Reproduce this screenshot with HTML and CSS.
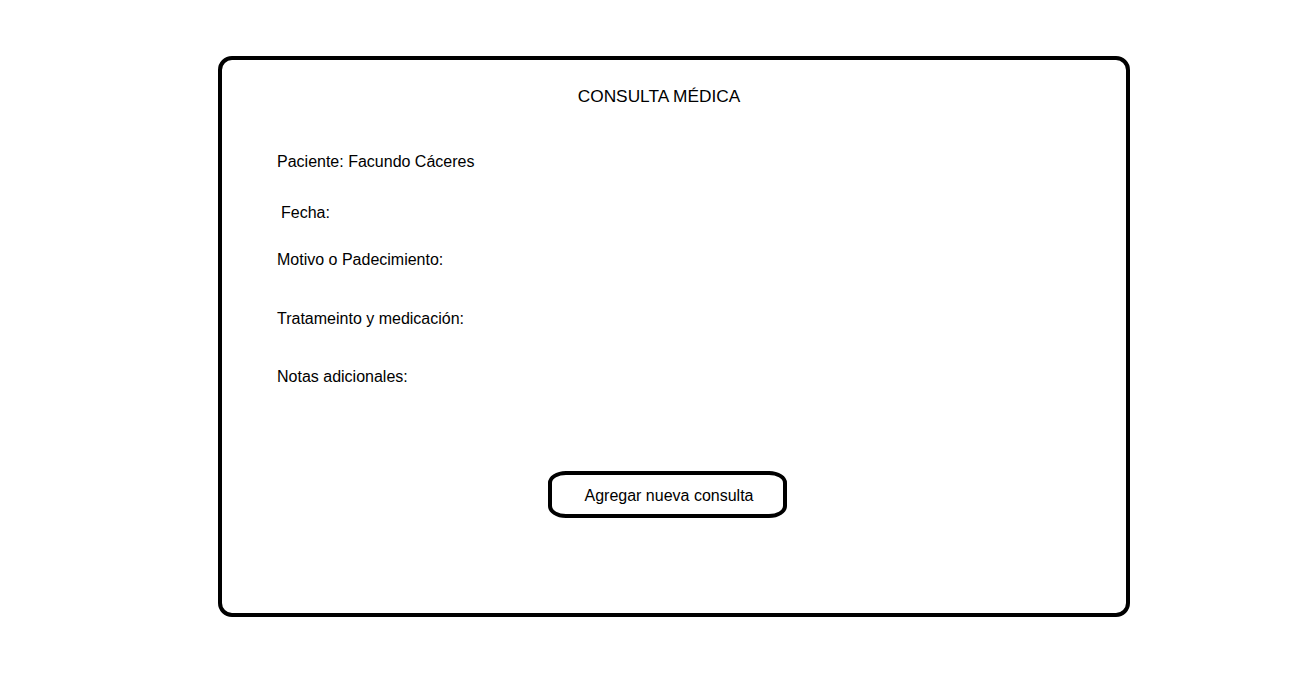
FILE: index.html
```html
<!DOCTYPE html>
<html lang="es">
<head>
<meta charset="utf-8">
<title>Consulta médica</title>
<link rel="stylesheet" href="styles.css">
</head>
<body>
<div class="page">
  <section class="card">
    <h1 class="title">CONSULTA MÉDICA</h1>
    <div class="fields">
      <p class="field f-paciente">Paciente: Facundo Cáceres</p>
      <p class="field f-fecha">Fecha:</p>
      <p class="field f-motivo">Motivo o Padecimiento:</p>
      <p class="field f-trat">Tratameinto y medicación:</p>
      <p class="field f-notas">Notas adicionales:</p>
    </div>
    <button class="btn" type="button">Agregar nueva consulta</button>
  </section>
</div>
</body>
</html>
```
FILE: styles.css
```css
html, body {
  margin: 0;
  padding: 0;
  background: #fff;
}
body {
  font-family: "Liberation Sans", Arial, sans-serif;
  font-size: 16px;
  line-height: 18px;
  color: #000;
}
.page {
  padding: 56px 0 0 218px;
}
.card {
  box-sizing: border-box;
  width: 912px;
  height: 561px;
  border: 4px solid #000;
  border-radius: 14px;
  padding-top: 27px;
  display: flex;
  flex-direction: column;
  align-items: flex-start;
}
.title {
  margin: 0;
  align-self: stretch;
  font-size: 17.3px;
  font-weight: normal;
  line-height: 18px;
  text-align: center;
  padding-right: 30px;
}
.fields {
  display: flex;
  flex-direction: column;
  padding-left: 55px;
}
.field {
  margin: 0;
  line-height: 18px;
}
.f-paciente { margin-top: 48px; }
.f-fecha { margin-top: 33px; padding-left: 4px; }
.f-motivo { margin-top: 29px; }
.f-trat { margin-top: 41px; }
.f-notas { margin-top: 40px; }
.btn {
  box-sizing: border-box;
  margin: 85px 0 0 326px;
  width: 239px;
  height: 47px;
  border: 4px solid #000;
  border-radius: 18px / 12px;
  background: #fff;
  font-family: inherit;
  font-size: 16px;
  line-height: 18px;
  color: #000;
  padding: 3px 0 0 3px;
}
```
